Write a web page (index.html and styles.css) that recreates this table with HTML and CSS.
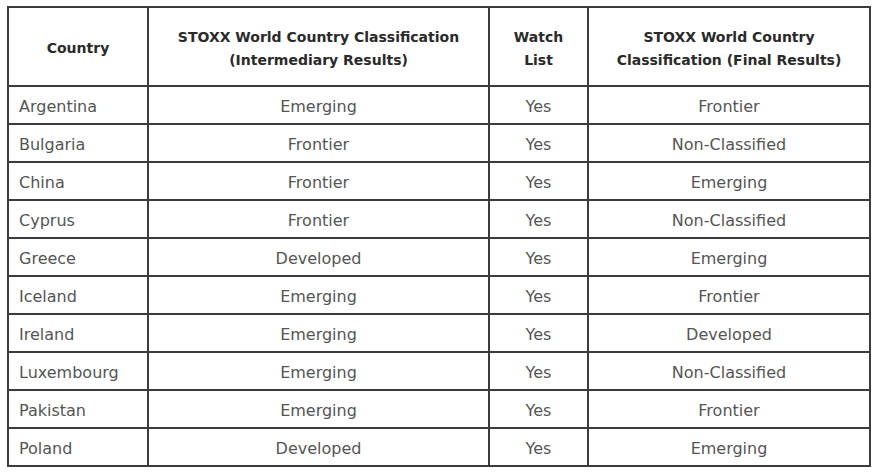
FILE: index.html
```html
<!DOCTYPE html>
<html>
<head>
<meta charset="utf-8">
<link rel="stylesheet" href="styles.css">
</head>
<body>
<table class="cls-table">
  <thead>
    <tr>
      <th class="col-country">Country</th>
      <th class="col-inter">STOXX World Country Classification<br>(Intermediary Results)</th>
      <th class="col-watch">Watch<br>List</th>
      <th class="col-final">STOXX World Country<br>Classification (Final Results)</th>
    </tr>
  </thead>
  <tbody>
    <tr><td class="name">Argentina</td><td>Emerging</td><td>Yes</td><td>Frontier</td></tr>
    <tr><td class="name">Bulgaria</td><td>Frontier</td><td>Yes</td><td>Non-Classified</td></tr>
    <tr><td class="name">China</td><td>Frontier</td><td>Yes</td><td>Emerging</td></tr>
    <tr><td class="name">Cyprus</td><td>Frontier</td><td>Yes</td><td>Non-Classified</td></tr>
    <tr><td class="name">Greece</td><td>Developed</td><td>Yes</td><td>Emerging</td></tr>
    <tr><td class="name">Iceland</td><td>Emerging</td><td>Yes</td><td>Frontier</td></tr>
    <tr><td class="name">Ireland</td><td>Emerging</td><td>Yes</td><td>Developed</td></tr>
    <tr><td class="name">Luxembourg</td><td>Emerging</td><td>Yes</td><td>Non-Classified</td></tr>
    <tr><td class="name">Pakistan</td><td>Emerging</td><td>Yes</td><td>Frontier</td></tr>
    <tr><td class="name">Poland</td><td>Developed</td><td>Yes</td><td>Emerging</td></tr>
  </tbody>
</table>
</body>
</html>
```
FILE: styles.css
```css
html, body {
  margin: 0;
  padding: 0;
  background: #ffffff;
}
body {
  padding: 6px 0 0 7px;
  font-family: "DejaVu Sans", "Liberation Sans", sans-serif;
}
.cls-table {
  border-collapse: collapse;
  table-layout: fixed;
  width: 862px;
}
.cls-table th,
.cls-table td {
  box-sizing: border-box;
  border: 2px solid #3c3c3c;
  padding: 0 9px;
  text-align: center;
  vertical-align: middle;
}
.cls-table th {
  height: 79px;
  font-weight: 700;
  font-size: 14px;
  line-height: 23px;
  color: #2a2a2a;
  padding-top: 4px;
}
.cls-table td {
  height: 38px;
  font-size: 16px;
  color: #555555;
  padding-top: 2px;
}
.cls-table td.name {
  text-align: left;
  padding-left: 10px;
}
.col-country { width: 140px; }
.col-inter { width: 341px; }
.col-watch { width: 99px; }
.col-final { width: 282px; }
```
